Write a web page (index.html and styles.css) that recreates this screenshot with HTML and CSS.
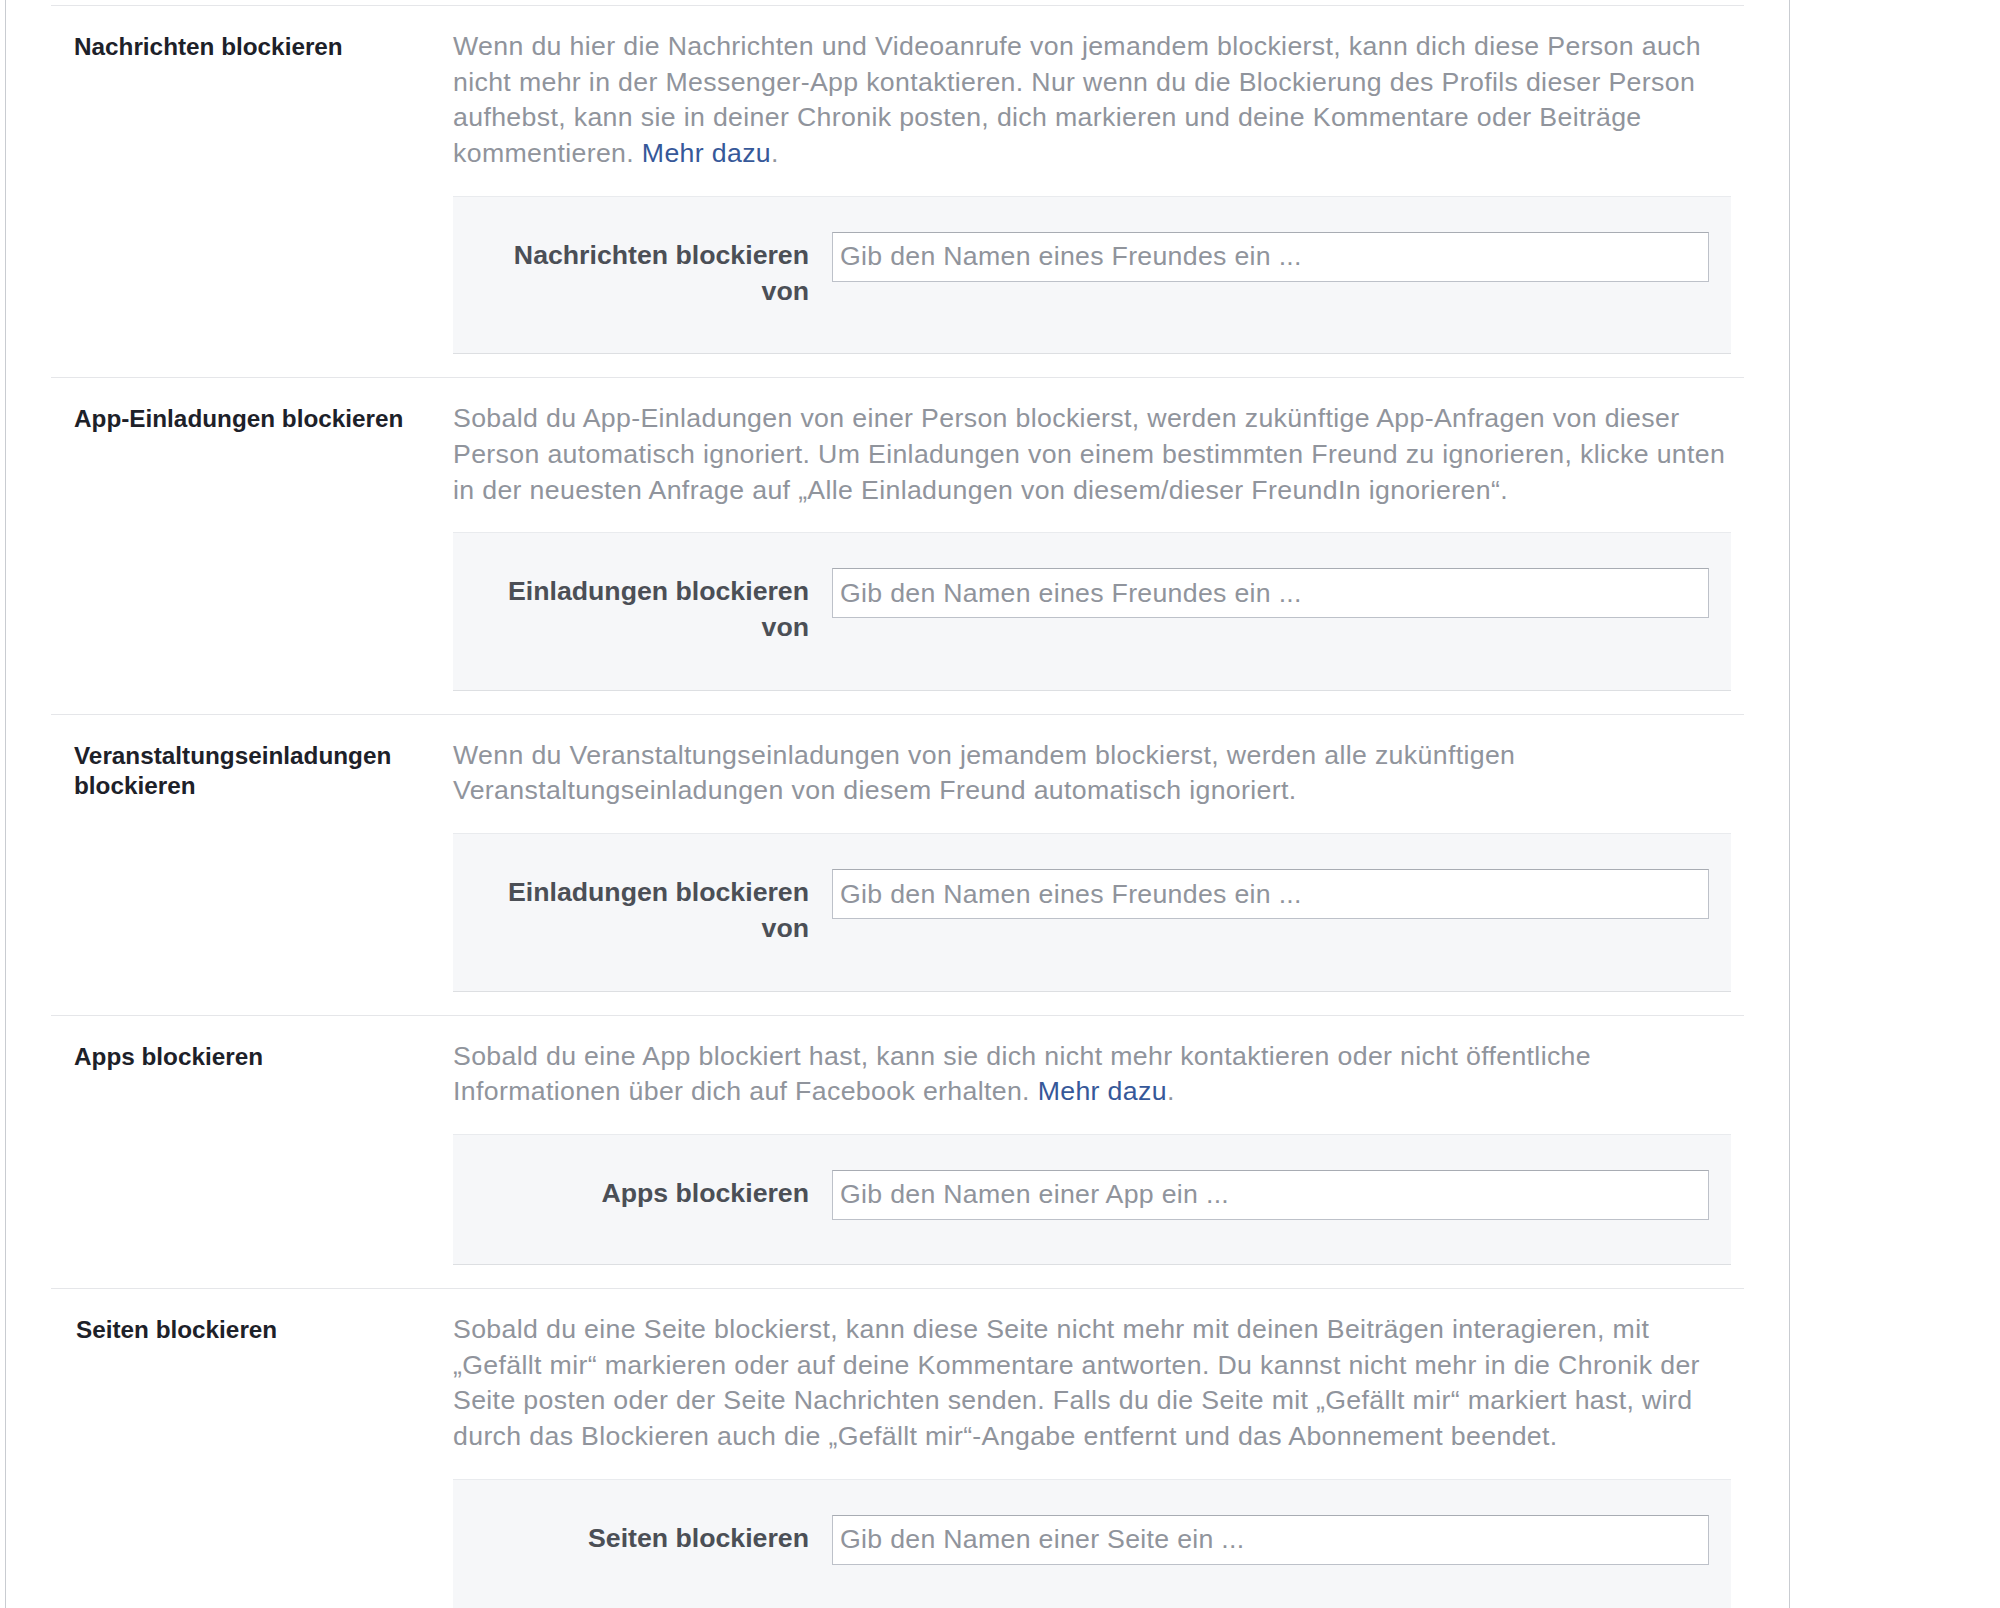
FILE: index.html
```html
<!DOCTYPE html>
<html lang="de">
<head>
  <meta charset="UTF-8" />
  <meta name="viewport" content="width=device-width, initial-scale=1.0"/>
  <title>Blockieren</title>
  <link rel="stylesheet" href="styles.css">
</head>
<body>

  <div class="settings">

    <div class="block-row">
      <div class="row-label">Nachrichten blockieren</div>
      <div class="row-content">
        <div class="row-desc">Wenn du hier die Nachrichten und Videoanrufe von jemandem blockierst, kann dich diese Person auch nicht mehr in der Messenger-App kontaktieren. Nur wenn du die Blockierung des Profils dieser Person aufhebst, kann sie in deiner Chronik posten, dich markieren und deine Kommentare oder Beiträge kommentieren. <a href="#">Mehr dazu</a>.</div>
        <div class="block-box">
          <label for="blockMessages">Nachrichten blockieren von</label>
          <input type="text" id="blockMessages" placeholder="Gib den Namen eines Freundes ein ...">
        </div>
      </div>
    </div>

    <div class="block-row">
      <div class="row-label">App-Einladungen blockieren</div>
      <div class="row-content">
        <div class="row-desc">Sobald du App-Einladungen von einer Person blockierst, werden zukünftige App-Anfragen von dieser Person automatisch ignoriert. Um Einladungen von einem bestimmten Freund zu ignorieren, klicke unten in der neuesten Anfrage auf „Alle Einladungen von diesem/dieser FreundIn ignorieren“.</div>
        <div class="block-box">
          <label for="blockAppInvites">Einladungen blockieren von</label>
          <input type="text" id="blockAppInvites" placeholder="Gib den Namen eines Freundes ein ...">
        </div>
      </div>
    </div>

    <div class="block-row">
      <div class="row-label">Veranstaltungseinladungen blockieren</div>
      <div class="row-content">
        <div class="row-desc">Wenn du Veranstaltungseinladungen von jemandem blockierst, werden alle zukünftigen Veranstaltungseinladungen von diesem Freund automatisch ignoriert.</div>
        <div class="block-box">
          <label for="blockEventInvites">Einladungen blockieren von</label>
          <input type="text" id="blockEventInvites" placeholder="Gib den Namen eines Freundes ein ...">
        </div>
      </div>
    </div>

    <div class="block-row">
      <div class="row-label">Apps blockieren</div>
      <div class="row-content">
        <div class="row-desc">Sobald du eine App blockiert hast, kann sie dich nicht mehr kontaktieren oder nicht öffentliche Informationen über dich auf Facebook erhalten. <a href="#">Mehr dazu</a>.</div>
        <div class="block-box">
          <label for="blockApps">Apps blockieren</label>
          <input type="text" id="blockApps" placeholder="Gib den Namen einer App ein ...">
        </div>
      </div>
    </div>

    <div class="block-row">
      <div class="row-label page-label">Seiten blockieren</div>
      <div class="row-content">
        <div class="row-desc">Sobald du eine Seite blockierst, kann diese Seite nicht mehr mit deinen Beiträgen interagieren, mit „Gefällt mir“ markieren oder auf deine Kommentare antworten. Du kannst nicht mehr in die Chronik der Seite posten oder der Seite Nachrichten senden. Falls du die Seite mit „Gefällt mir“ markiert hast, wird durch das Blockieren auch die „Gefällt mir“-Angabe entfernt und das Abonnement beendet.</div>
        <div class="block-box">
          <label for="blockPages">Seiten blockieren</label>
          <input type="text" id="blockPages" placeholder="Gib den Namen einer Seite ein ...">
        </div>
      </div>
    </div>

  </div>

</body>
</html>
```

FILE: styles.css
```css
* {
  box-sizing: border-box;
}

body {
  margin: 0;
  background: #fff;
  font-family: "Liberation Sans", Arial, sans-serif;
}

.settings {
  margin-left: 5px;
  width: 1785px;
  min-height: 1608px;
  padding: 5px 45px 0;
  border-left: 1px solid #c9ccd1;
  border-right: 1px solid #c9ccd1;
}

.block-row {
  display: grid;
  grid-template-columns: 402px 1278px;
  padding: 23px 13px 23px 0;
  border-top: 1px solid #e5e6e9;
}

.row-label {
  padding: 3px 29px 0 23px;
  font-size: 24.3px;
  font-weight: bold;
  line-height: 30.6px;
  color: #1d2129;
}

.page-label {
  padding-left: 25px;
}

.row-desc {
  font-size: 26.7px;
  line-height: 35.7px;
  letter-spacing: 0.35px;
  color: #90949c;
}

.row-desc a {
  color: #365899;
  text-decoration: none;
}

.block-box {
  display: flex;
  align-items: flex-start;
  gap: 23px;
  margin-top: 24px;
  padding: 35px 22px 44px 36px;
  background: #f6f7f9;
  border-top: 1px solid #e9ebee;
  border-bottom: 1px solid #dddfe2;
}

.block-box label {
  flex: none;
  width: 320px;
  padding-top: 6px;
  text-align: right;
  font-size: 26.7px;
  font-weight: bold;
  line-height: 35.7px;
  color: #4b4f56;
}

.block-box input {
  flex: 1;
  height: 50px;
  padding: 0 7px;
  background: #fff;
  border: 1px solid #bdc1c9;
  border-top-color: #a8acb3;
  border-radius: 0;
  font: 26.7px "Liberation Sans", Arial, sans-serif;
  letter-spacing: 0.3px;
  color: #1d2129;
  outline: none;
}

.block-box input::placeholder {
  color: #90949c;
}
```
